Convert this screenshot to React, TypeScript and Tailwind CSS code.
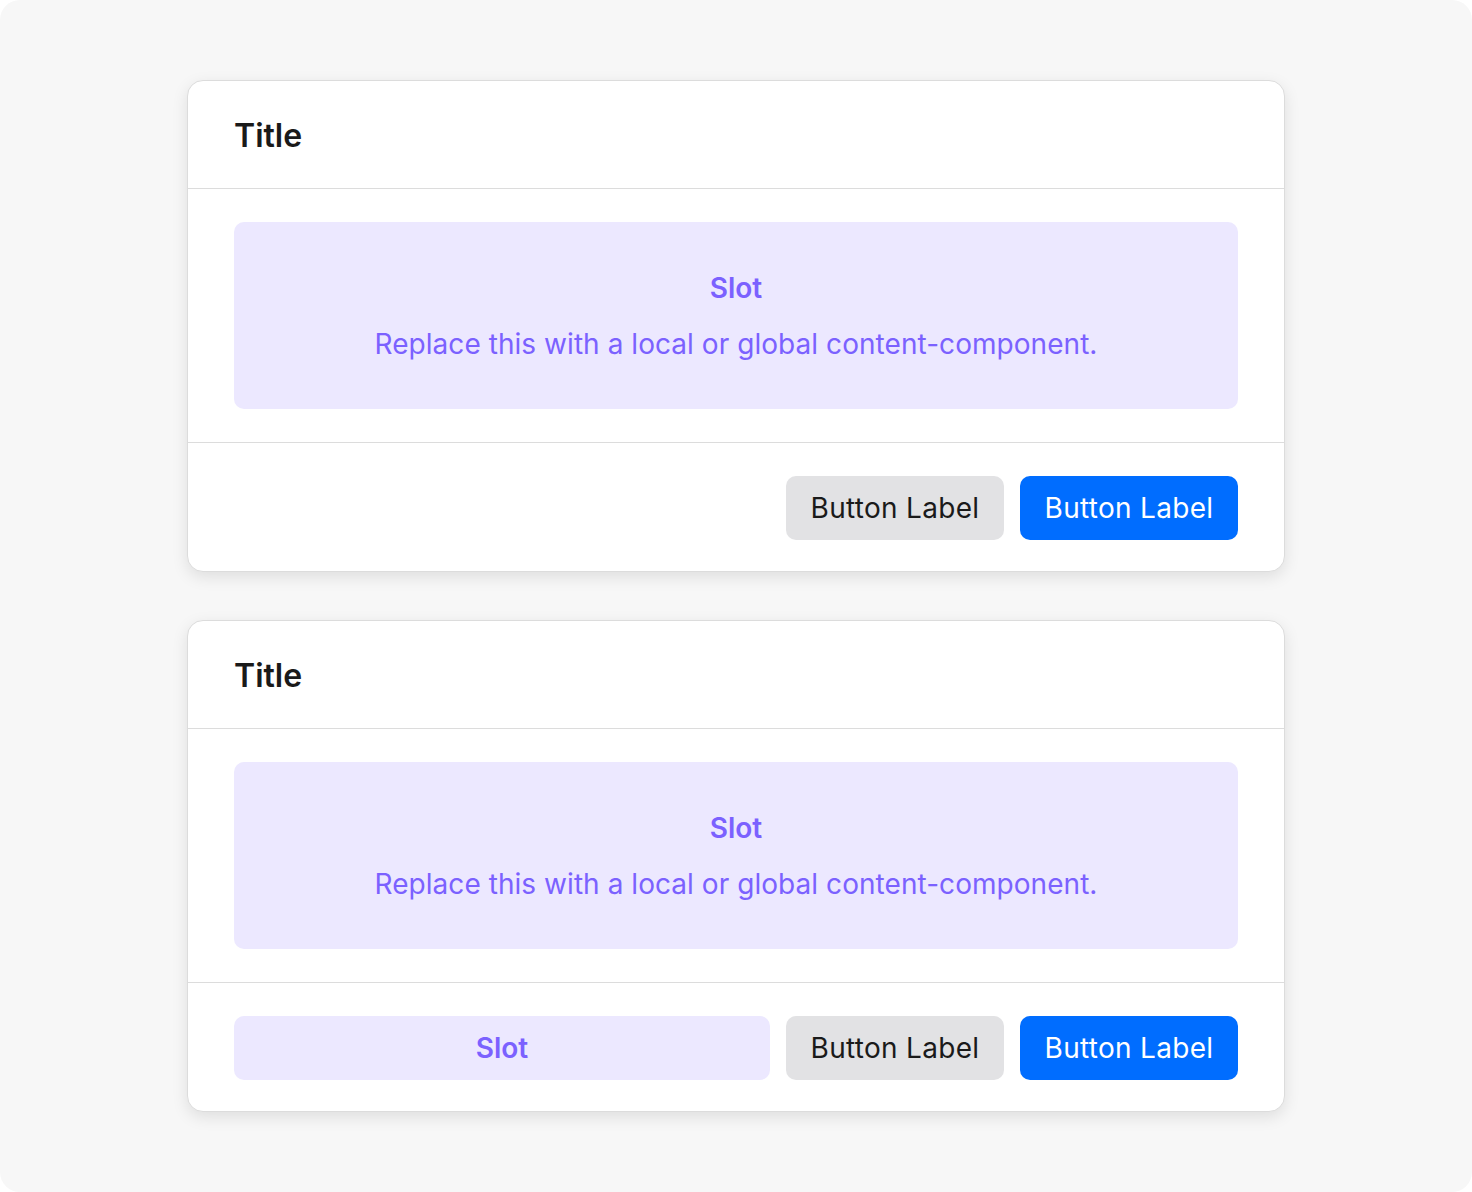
import React from "react";

const font = { fontFamily: "Inter, 'Noto Sans', sans-serif" };

function SlotBox() {
  return (
    <div className="flex h-[187px] flex-col items-center justify-center gap-[22px] rounded-[10px] bg-[#ece8ff] text-[#7b61ff]">
      <div className="text-[28px] font-semibold leading-[34px]">Slot</div>
      <div className="text-[28px] font-normal leading-[34px] tracking-[0.05px]">
        Replace this with a local or global content-component.
      </div>
    </div>
  );
}

function Buttons() {
  return (
    <>
      <button className="flex h-[64px] w-[218px] items-center justify-center rounded-[10px] bg-[#e2e2e4] text-[28px] tracking-[0.3px] text-[#1a1a1a]">
        Button Label
      </button>
      <button className="flex h-[64px] w-[218px] items-center justify-center rounded-[10px] bg-[#006dff] text-[28px] tracking-[0.3px] text-white">
        Button Label
      </button>
    </>
  );
}

function Card({ footerSlot }: { footerSlot?: boolean }) {
  return (
    <div className="w-[1098px] overflow-hidden rounded-[16px] border border-[#dcdcdc] bg-white shadow-[0_5px_16px_rgba(0,0,0,0.10)]">
      <div className="flex h-[107px] items-center px-[46px] pt-[2px] text-[32px] font-semibold leading-[39px] text-[#1a1a1a]">
        Title
      </div>
      <div className="border-t border-[#dcdcdc] px-[46px] py-[33px]">
        <SlotBox />
      </div>
      <div className="flex items-center justify-end gap-[16px] border-t border-[#dcdcdc] px-[46px] pt-[33px] pb-[31px]">
        {footerSlot && (
          <div className="flex h-[64px] flex-1 items-center justify-center rounded-[10px] bg-[#ece8ff] text-[28px] font-semibold text-[#7b61ff]">
            Slot
          </div>
        )}
        <Buttons />
      </div>
    </div>
  );
}

export default function App() {
  return (
    <div className="bg-white" style={font}>
      <div className="flex h-[1192px] w-[1472px] flex-col items-center gap-[48px] rounded-[20px] bg-[#f7f7f7] pt-[80px]">
        <Card />
        <Card footerSlot />
      </div>
    </div>
  );
}
